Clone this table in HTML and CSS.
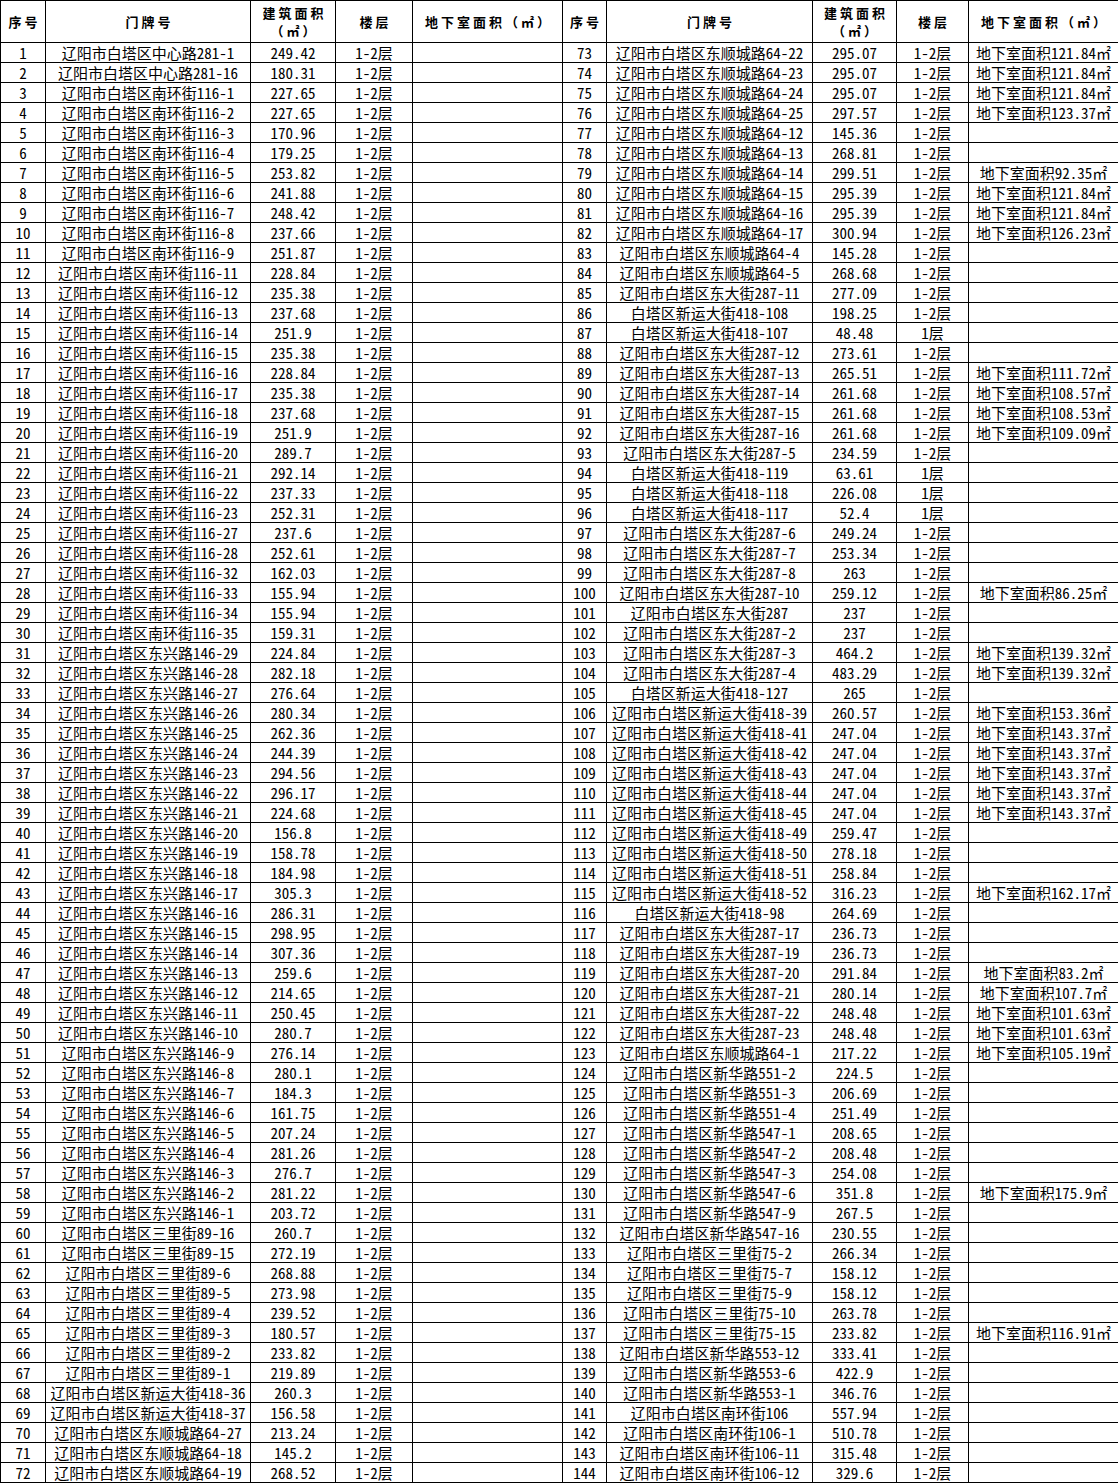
FILE: index.html
```html
<!DOCTYPE html>
<html lang="zh-CN">
<head>
<meta charset="utf-8">
<title>房屋清单</title>
<link rel="stylesheet" href="styles.css">
</head>
<body>
<table class="sheet">
<colgroup>
<col class="c-no"><col class="c-addr"><col class="c-area"><col class="c-floor"><col class="c-base">
<col class="c-no2"><col class="c-addr2"><col class="c-area2"><col class="c-floor2"><col class="c-base2">
</colgroup>
<thead>
<tr class="head">
<th>序号</th><th>门牌号</th><th>建筑面积<br>（㎡）</th><th>楼层</th><th>地下室面积（㎡）</th>
<th>序号</th><th>门牌号</th><th>建筑面积<br>（㎡）</th><th>楼层</th><th>地下室面积（㎡）</th>
</tr>
</thead>
<tbody>
<tr><td>1</td><td>辽阳市白塔区中心路281-1</td><td>249.42</td><td>1-2层</td><td></td><td>73</td><td>辽阳市白塔区东顺城路64-22</td><td>295.07</td><td>1-2层</td><td>地下室面积121.84㎡</td></tr>
<tr><td>2</td><td>辽阳市白塔区中心路281-16</td><td>180.31</td><td>1-2层</td><td></td><td>74</td><td>辽阳市白塔区东顺城路64-23</td><td>295.07</td><td>1-2层</td><td>地下室面积121.84㎡</td></tr>
<tr><td>3</td><td>辽阳市白塔区南环街116-1</td><td>227.65</td><td>1-2层</td><td></td><td>75</td><td>辽阳市白塔区东顺城路64-24</td><td>295.07</td><td>1-2层</td><td>地下室面积121.84㎡</td></tr>
<tr><td>4</td><td>辽阳市白塔区南环街116-2</td><td>227.65</td><td>1-2层</td><td></td><td>76</td><td>辽阳市白塔区东顺城路64-25</td><td>297.57</td><td>1-2层</td><td>地下室面积123.37㎡</td></tr>
<tr><td>5</td><td>辽阳市白塔区南环街116-3</td><td>170.96</td><td>1-2层</td><td></td><td>77</td><td>辽阳市白塔区东顺城路64-12</td><td>145.36</td><td>1-2层</td><td></td></tr>
<tr><td>6</td><td>辽阳市白塔区南环街116-4</td><td>179.25</td><td>1-2层</td><td></td><td>78</td><td>辽阳市白塔区东顺城路64-13</td><td>268.81</td><td>1-2层</td><td></td></tr>
<tr><td>7</td><td>辽阳市白塔区南环街116-5</td><td>253.82</td><td>1-2层</td><td></td><td>79</td><td>辽阳市白塔区东顺城路64-14</td><td>299.51</td><td>1-2层</td><td>地下室面积92.35㎡</td></tr>
<tr><td>8</td><td>辽阳市白塔区南环街116-6</td><td>241.88</td><td>1-2层</td><td></td><td>80</td><td>辽阳市白塔区东顺城路64-15</td><td>295.39</td><td>1-2层</td><td>地下室面积121.84㎡</td></tr>
<tr><td>9</td><td>辽阳市白塔区南环街116-7</td><td>248.42</td><td>1-2层</td><td></td><td>81</td><td>辽阳市白塔区东顺城路64-16</td><td>295.39</td><td>1-2层</td><td>地下室面积121.84㎡</td></tr>
<tr><td>10</td><td>辽阳市白塔区南环街116-8</td><td>237.66</td><td>1-2层</td><td></td><td>82</td><td>辽阳市白塔区东顺城路64-17</td><td>300.94</td><td>1-2层</td><td>地下室面积126.23㎡</td></tr>
<tr><td>11</td><td>辽阳市白塔区南环街116-9</td><td>251.87</td><td>1-2层</td><td></td><td>83</td><td>辽阳市白塔区东顺城路64-4</td><td>145.28</td><td>1-2层</td><td></td></tr>
<tr><td>12</td><td>辽阳市白塔区南环街116-11</td><td>228.84</td><td>1-2层</td><td></td><td>84</td><td>辽阳市白塔区东顺城路64-5</td><td>268.68</td><td>1-2层</td><td></td></tr>
<tr><td>13</td><td>辽阳市白塔区南环街116-12</td><td>235.38</td><td>1-2层</td><td></td><td>85</td><td>辽阳市白塔区东大街287-11</td><td>277.09</td><td>1-2层</td><td></td></tr>
<tr><td>14</td><td>辽阳市白塔区南环街116-13</td><td>237.68</td><td>1-2层</td><td></td><td>86</td><td>白塔区新运大街418-108</td><td>198.25</td><td>1-2层</td><td></td></tr>
<tr><td>15</td><td>辽阳市白塔区南环街116-14</td><td>251.9</td><td>1-2层</td><td></td><td>87</td><td>白塔区新运大街418-107</td><td>48.48</td><td>1层</td><td></td></tr>
<tr><td>16</td><td>辽阳市白塔区南环街116-15</td><td>235.38</td><td>1-2层</td><td></td><td>88</td><td>辽阳市白塔区东大街287-12</td><td>273.61</td><td>1-2层</td><td></td></tr>
<tr><td>17</td><td>辽阳市白塔区南环街116-16</td><td>228.84</td><td>1-2层</td><td></td><td>89</td><td>辽阳市白塔区东大街287-13</td><td>265.51</td><td>1-2层</td><td>地下室面积111.72㎡</td></tr>
<tr><td>18</td><td>辽阳市白塔区南环街116-17</td><td>235.38</td><td>1-2层</td><td></td><td>90</td><td>辽阳市白塔区东大街287-14</td><td>261.68</td><td>1-2层</td><td>地下室面积108.57㎡</td></tr>
<tr><td>19</td><td>辽阳市白塔区南环街116-18</td><td>237.68</td><td>1-2层</td><td></td><td>91</td><td>辽阳市白塔区东大街287-15</td><td>261.68</td><td>1-2层</td><td>地下室面积108.53㎡</td></tr>
<tr><td>20</td><td>辽阳市白塔区南环街116-19</td><td>251.9</td><td>1-2层</td><td></td><td>92</td><td>辽阳市白塔区东大街287-16</td><td>261.68</td><td>1-2层</td><td>地下室面积109.09㎡</td></tr>
<tr><td>21</td><td>辽阳市白塔区南环街116-20</td><td>289.7</td><td>1-2层</td><td></td><td>93</td><td>辽阳市白塔区东大街287-5</td><td>234.59</td><td>1-2层</td><td></td></tr>
<tr><td>22</td><td>辽阳市白塔区南环街116-21</td><td>292.14</td><td>1-2层</td><td></td><td>94</td><td>白塔区新运大街418-119</td><td>63.61</td><td>1层</td><td></td></tr>
<tr><td>23</td><td>辽阳市白塔区南环街116-22</td><td>237.33</td><td>1-2层</td><td></td><td>95</td><td>白塔区新运大街418-118</td><td>226.08</td><td>1层</td><td></td></tr>
<tr><td>24</td><td>辽阳市白塔区南环街116-23</td><td>252.31</td><td>1-2层</td><td></td><td>96</td><td>白塔区新运大街418-117</td><td>52.4</td><td>1层</td><td></td></tr>
<tr><td>25</td><td>辽阳市白塔区南环街116-27</td><td>237.6</td><td>1-2层</td><td></td><td>97</td><td>辽阳市白塔区东大街287-6</td><td>249.24</td><td>1-2层</td><td></td></tr>
<tr><td>26</td><td>辽阳市白塔区南环街116-28</td><td>252.61</td><td>1-2层</td><td></td><td>98</td><td>辽阳市白塔区东大街287-7</td><td>253.34</td><td>1-2层</td><td></td></tr>
<tr><td>27</td><td>辽阳市白塔区南环街116-32</td><td>162.03</td><td>1-2层</td><td></td><td>99</td><td>辽阳市白塔区东大街287-8</td><td>263</td><td>1-2层</td><td></td></tr>
<tr><td>28</td><td>辽阳市白塔区南环街116-33</td><td>155.94</td><td>1-2层</td><td></td><td>100</td><td>辽阳市白塔区东大街287-10</td><td>259.12</td><td>1-2层</td><td>地下室面积86.25㎡</td></tr>
<tr><td>29</td><td>辽阳市白塔区南环街116-34</td><td>155.94</td><td>1-2层</td><td></td><td>101</td><td>辽阳市白塔区东大街287</td><td>237</td><td>1-2层</td><td></td></tr>
<tr><td>30</td><td>辽阳市白塔区南环街116-35</td><td>159.31</td><td>1-2层</td><td></td><td>102</td><td>辽阳市白塔区东大街287-2</td><td>237</td><td>1-2层</td><td></td></tr>
<tr><td>31</td><td>辽阳市白塔区东兴路146-29</td><td>224.84</td><td>1-2层</td><td></td><td>103</td><td>辽阳市白塔区东大街287-3</td><td>464.2</td><td>1-2层</td><td>地下室面积139.32㎡</td></tr>
<tr><td>32</td><td>辽阳市白塔区东兴路146-28</td><td>282.18</td><td>1-2层</td><td></td><td>104</td><td>辽阳市白塔区东大街287-4</td><td>483.29</td><td>1-2层</td><td>地下室面积139.32㎡</td></tr>
<tr><td>33</td><td>辽阳市白塔区东兴路146-27</td><td>276.64</td><td>1-2层</td><td></td><td>105</td><td>白塔区新运大街418-127</td><td>265</td><td>1-2层</td><td></td></tr>
<tr><td>34</td><td>辽阳市白塔区东兴路146-26</td><td>280.34</td><td>1-2层</td><td></td><td>106</td><td>辽阳市白塔区新运大街418-39</td><td>260.57</td><td>1-2层</td><td>地下室面积153.36㎡</td></tr>
<tr><td>35</td><td>辽阳市白塔区东兴路146-25</td><td>262.36</td><td>1-2层</td><td></td><td>107</td><td>辽阳市白塔区新运大街418-41</td><td>247.04</td><td>1-2层</td><td>地下室面积143.37㎡</td></tr>
<tr><td>36</td><td>辽阳市白塔区东兴路146-24</td><td>244.39</td><td>1-2层</td><td></td><td>108</td><td>辽阳市白塔区新运大街418-42</td><td>247.04</td><td>1-2层</td><td>地下室面积143.37㎡</td></tr>
<tr><td>37</td><td>辽阳市白塔区东兴路146-23</td><td>294.56</td><td>1-2层</td><td></td><td>109</td><td>辽阳市白塔区新运大街418-43</td><td>247.04</td><td>1-2层</td><td>地下室面积143.37㎡</td></tr>
<tr><td>38</td><td>辽阳市白塔区东兴路146-22</td><td>296.17</td><td>1-2层</td><td></td><td>110</td><td>辽阳市白塔区新运大街418-44</td><td>247.04</td><td>1-2层</td><td>地下室面积143.37㎡</td></tr>
<tr><td>39</td><td>辽阳市白塔区东兴路146-21</td><td>224.68</td><td>1-2层</td><td></td><td>111</td><td>辽阳市白塔区新运大街418-45</td><td>247.04</td><td>1-2层</td><td>地下室面积143.37㎡</td></tr>
<tr><td>40</td><td>辽阳市白塔区东兴路146-20</td><td>156.8</td><td>1-2层</td><td></td><td>112</td><td>辽阳市白塔区新运大街418-49</td><td>259.47</td><td>1-2层</td><td></td></tr>
<tr><td>41</td><td>辽阳市白塔区东兴路146-19</td><td>158.78</td><td>1-2层</td><td></td><td>113</td><td>辽阳市白塔区新运大街418-50</td><td>278.18</td><td>1-2层</td><td></td></tr>
<tr><td>42</td><td>辽阳市白塔区东兴路146-18</td><td>184.98</td><td>1-2层</td><td></td><td>114</td><td>辽阳市白塔区新运大街418-51</td><td>258.84</td><td>1-2层</td><td></td></tr>
<tr><td>43</td><td>辽阳市白塔区东兴路146-17</td><td>305.3</td><td>1-2层</td><td></td><td>115</td><td>辽阳市白塔区新运大街418-52</td><td>316.23</td><td>1-2层</td><td>地下室面积162.17㎡</td></tr>
<tr><td>44</td><td>辽阳市白塔区东兴路146-16</td><td>286.31</td><td>1-2层</td><td></td><td>116</td><td>白塔区新运大街418-98</td><td>264.69</td><td>1-2层</td><td></td></tr>
<tr><td>45</td><td>辽阳市白塔区东兴路146-15</td><td>298.95</td><td>1-2层</td><td></td><td>117</td><td>辽阳市白塔区东大街287-17</td><td>236.73</td><td>1-2层</td><td></td></tr>
<tr><td>46</td><td>辽阳市白塔区东兴路146-14</td><td>307.36</td><td>1-2层</td><td></td><td>118</td><td>辽阳市白塔区东大街287-19</td><td>236.73</td><td>1-2层</td><td></td></tr>
<tr><td>47</td><td>辽阳市白塔区东兴路146-13</td><td>259.6</td><td>1-2层</td><td></td><td>119</td><td>辽阳市白塔区东大街287-20</td><td>291.84</td><td>1-2层</td><td>地下室面积83.2㎡</td></tr>
<tr><td>48</td><td>辽阳市白塔区东兴路146-12</td><td>214.65</td><td>1-2层</td><td></td><td>120</td><td>辽阳市白塔区东大街287-21</td><td>280.14</td><td>1-2层</td><td>地下室面积107.7㎡</td></tr>
<tr><td>49</td><td>辽阳市白塔区东兴路146-11</td><td>250.45</td><td>1-2层</td><td></td><td>121</td><td>辽阳市白塔区东大街287-22</td><td>248.48</td><td>1-2层</td><td>地下室面积101.63㎡</td></tr>
<tr><td>50</td><td>辽阳市白塔区东兴路146-10</td><td>280.7</td><td>1-2层</td><td></td><td>122</td><td>辽阳市白塔区东大街287-23</td><td>248.48</td><td>1-2层</td><td>地下室面积101.63㎡</td></tr>
<tr><td>51</td><td>辽阳市白塔区东兴路146-9</td><td>276.14</td><td>1-2层</td><td></td><td>123</td><td>辽阳市白塔区东顺城路64-1</td><td>217.22</td><td>1-2层</td><td>地下室面积105.19㎡</td></tr>
<tr><td>52</td><td>辽阳市白塔区东兴路146-8</td><td>280.1</td><td>1-2层</td><td></td><td>124</td><td>辽阳市白塔区新华路551-2</td><td>224.5</td><td>1-2层</td><td></td></tr>
<tr><td>53</td><td>辽阳市白塔区东兴路146-7</td><td>184.3</td><td>1-2层</td><td></td><td>125</td><td>辽阳市白塔区新华路551-3</td><td>206.69</td><td>1-2层</td><td></td></tr>
<tr><td>54</td><td>辽阳市白塔区东兴路146-6</td><td>161.75</td><td>1-2层</td><td></td><td>126</td><td>辽阳市白塔区新华路551-4</td><td>251.49</td><td>1-2层</td><td></td></tr>
<tr><td>55</td><td>辽阳市白塔区东兴路146-5</td><td>207.24</td><td>1-2层</td><td></td><td>127</td><td>辽阳市白塔区新华路547-1</td><td>208.65</td><td>1-2层</td><td></td></tr>
<tr><td>56</td><td>辽阳市白塔区东兴路146-4</td><td>281.26</td><td>1-2层</td><td></td><td>128</td><td>辽阳市白塔区新华路547-2</td><td>208.48</td><td>1-2层</td><td></td></tr>
<tr><td>57</td><td>辽阳市白塔区东兴路146-3</td><td>276.7</td><td>1-2层</td><td></td><td>129</td><td>辽阳市白塔区新华路547-3</td><td>254.08</td><td>1-2层</td><td></td></tr>
<tr><td>58</td><td>辽阳市白塔区东兴路146-2</td><td>281.22</td><td>1-2层</td><td></td><td>130</td><td>辽阳市白塔区新华路547-6</td><td>351.8</td><td>1-2层</td><td>地下室面积175.9㎡</td></tr>
<tr><td>59</td><td>辽阳市白塔区东兴路146-1</td><td>203.72</td><td>1-2层</td><td></td><td>131</td><td>辽阳市白塔区新华路547-9</td><td>267.5</td><td>1-2层</td><td></td></tr>
<tr><td>60</td><td>辽阳市白塔区三里街89-16</td><td>260.7</td><td>1-2层</td><td></td><td>132</td><td>辽阳市白塔区新华路547-16</td><td>230.55</td><td>1-2层</td><td></td></tr>
<tr><td>61</td><td>辽阳市白塔区三里街89-15</td><td>272.19</td><td>1-2层</td><td></td><td>133</td><td>辽阳市白塔区三里街75-2</td><td>266.34</td><td>1-2层</td><td></td></tr>
<tr><td>62</td><td>辽阳市白塔区三里街89-6</td><td>268.88</td><td>1-2层</td><td></td><td>134</td><td>辽阳市白塔区三里街75-7</td><td>158.12</td><td>1-2层</td><td></td></tr>
<tr><td>63</td><td>辽阳市白塔区三里街89-5</td><td>273.98</td><td>1-2层</td><td></td><td>135</td><td>辽阳市白塔区三里街75-9</td><td>158.12</td><td>1-2层</td><td></td></tr>
<tr><td>64</td><td>辽阳市白塔区三里街89-4</td><td>239.52</td><td>1-2层</td><td></td><td>136</td><td>辽阳市白塔区三里街75-10</td><td>263.78</td><td>1-2层</td><td></td></tr>
<tr><td>65</td><td>辽阳市白塔区三里街89-3</td><td>180.57</td><td>1-2层</td><td></td><td>137</td><td>辽阳市白塔区三里街75-15</td><td>233.82</td><td>1-2层</td><td>地下室面积116.91㎡</td></tr>
<tr><td>66</td><td>辽阳市白塔区三里街89-2</td><td>233.82</td><td>1-2层</td><td></td><td>138</td><td>辽阳市白塔区新华路553-12</td><td>333.41</td><td>1-2层</td><td></td></tr>
<tr><td>67</td><td>辽阳市白塔区三里街89-1</td><td>219.89</td><td>1-2层</td><td></td><td>139</td><td>辽阳市白塔区新华路553-6</td><td>422.9</td><td>1-2层</td><td></td></tr>
<tr><td>68</td><td>辽阳市白塔区新运大街418-36</td><td>260.3</td><td>1-2层</td><td></td><td>140</td><td>辽阳市白塔区新华路553-1</td><td>346.76</td><td>1-2层</td><td></td></tr>
<tr><td>69</td><td>辽阳市白塔区新运大街418-37</td><td>156.58</td><td>1-2层</td><td></td><td>141</td><td>辽阳市白塔区南环街106</td><td>557.94</td><td>1-2层</td><td></td></tr>
<tr><td>70</td><td>辽阳市白塔区东顺城路64-27</td><td>213.24</td><td>1-2层</td><td></td><td>142</td><td>辽阳市白塔区南环街106-1</td><td>510.78</td><td>1-2层</td><td></td></tr>
<tr><td>71</td><td>辽阳市白塔区东顺城路64-18</td><td>145.2</td><td>1-2层</td><td></td><td>143</td><td>辽阳市白塔区南环街106-11</td><td>315.48</td><td>1-2层</td><td></td></tr>
<tr><td>72</td><td>辽阳市白塔区东顺城路64-19</td><td>268.52</td><td>1-2层</td><td></td><td>144</td><td>辽阳市白塔区南环街106-12</td><td>329.6</td><td>1-2层</td><td></td></tr>
</tbody>
</table>
</body>
</html>
```
FILE: styles.css
```css
html, body {
  margin: 0;
  padding: 0;
  background: #fff;
}

.sheet {
  border-collapse: collapse;
  table-layout: fixed;
  width: 1118px;
  color: #000;
  font-family: "Noto Sans Mono CJK SC", "Noto Sans CJK SC", monospace;
  font-size: 15px;
}

.c-no { width: 45px; }
.c-addr { width: 205px; }
.c-area { width: 85px; }
.c-floor { width: 77px; }
.c-base { width: 150px; }
.c-no2 { width: 44px; }
.c-addr2 { width: 206px; }
.c-area2 { width: 84px; }
.c-floor2 { width: 72px; }
.c-base2 { width: 150px; }

.sheet th,
.sheet td {
  border: 1px solid #000;
  padding: 0;
  text-align: center;
  vertical-align: middle;
  white-space: nowrap;
  overflow: hidden;
}

.sheet td {
  height: 19px;
  line-height: 19px;
}

.head th {
  height: 41px;
  font-family: "Noto Sans CJK SC", sans-serif;
  font-weight: 700;
  font-size: 13px;
  line-height: 18px;
  letter-spacing: 3px;
  padding-left: 3px;
}
```
